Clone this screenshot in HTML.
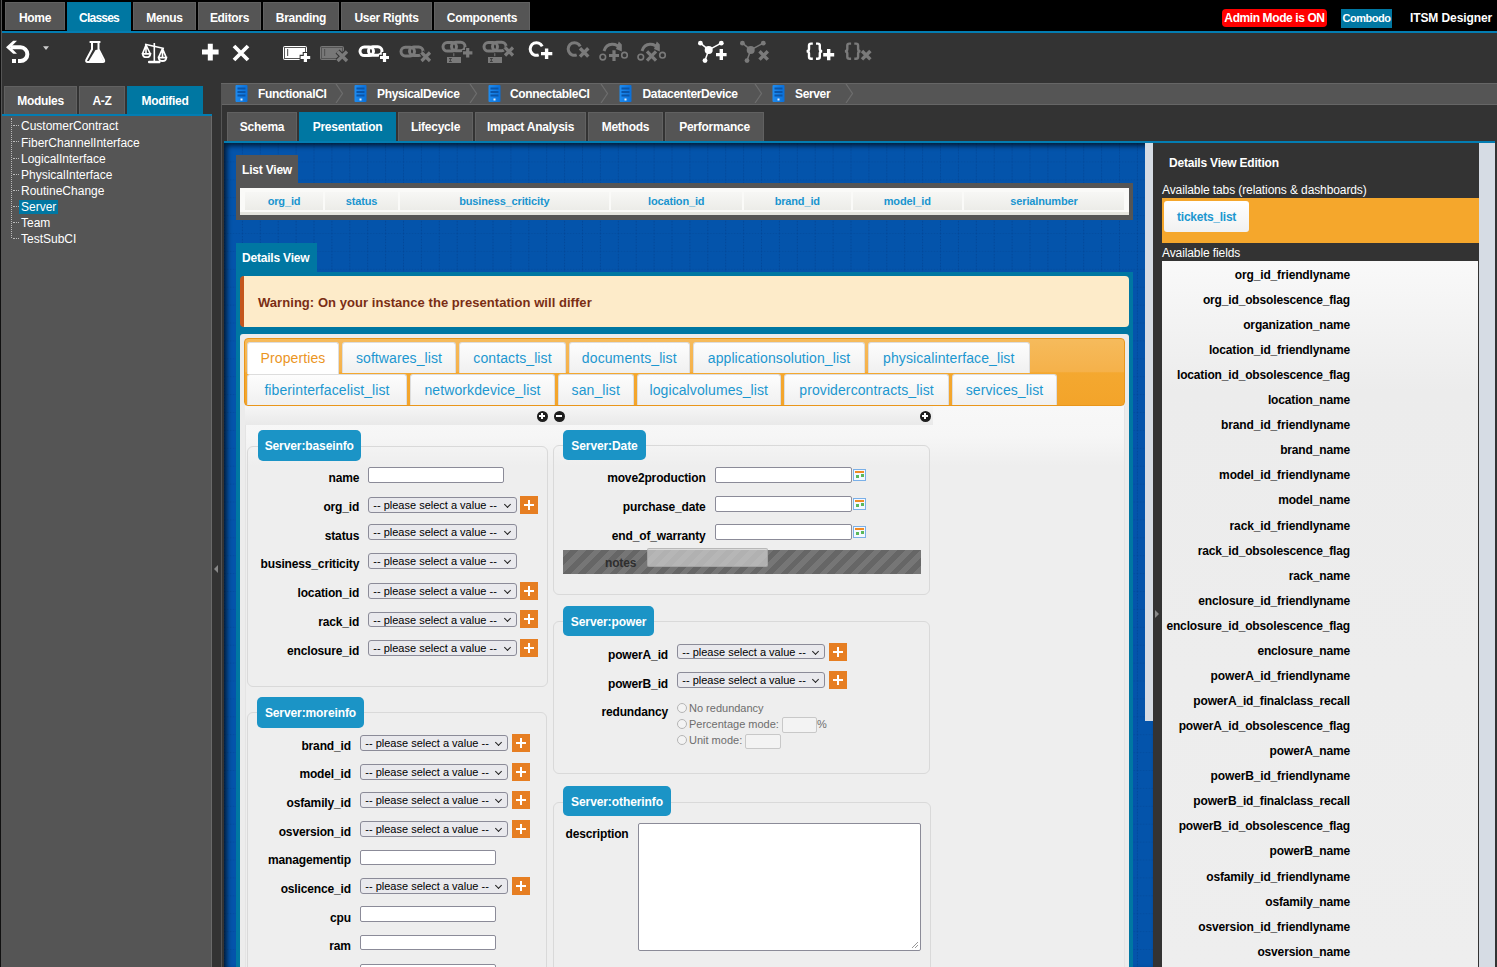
<!DOCTYPE html>
<html><head><meta charset="utf-8">
<style>
*{box-sizing:border-box;margin:0;padding:0}
html,body{width:1497px;height:967px;overflow:hidden;background:#333;font-family:"Liberation Sans",sans-serif;color:#fff}
.a{position:absolute}
#top{left:0;top:0;width:1497px;height:31px;background:#000}
.tt{position:absolute;top:2px;height:28px;background:#555;border:1px solid #616161;border-bottom:none;font-weight:bold;font-size:12px;line-height:30px;text-align:center;color:#fff;letter-spacing:-0.3px}
.tt.on{background:#0077a2;border-color:#0077a2;height:29px}
#bline{left:0;top:31px;width:1497px;height:2px;background:#037db2}
#lline{left:1px;top:0;width:1px;height:967px;background:#555}
#lline0{left:0;top:0;width:1px;height:967px;background:#111}
.lt{position:absolute;top:86px;height:29px;background:#555;border:1px solid #616161;border-bottom:none;font-weight:bold;font-size:12px;line-height:28px;text-align:center;letter-spacing:-0.3px}
.lt.on{background:#0077a2;border-color:#0077a2}
#tree{left:2px;top:116px;width:210px;height:851px;background:#555;border-right:1px solid #6a6a6a}
.ti{position:absolute;left:17px;height:14px;font-size:12px;line-height:14px;padding:0 2px;white-space:nowrap}
.ti.sel{background:#0077a2}
.th{position:absolute;left:11px;width:6px;height:0;border-top:1px dotted #bbb}
#crumb{left:221px;top:83px;width:1276px;height:22px;background:#555;border-top:1px solid #666;border-bottom:1px solid #666}
.cb{position:absolute;top:0;font-weight:bold;font-size:12px;line-height:21px;letter-spacing:-0.35px;white-space:nowrap}
.ct{position:absolute;top:112px;height:29px;background:#555;border:1px solid #616161;border-bottom:none;font-weight:bold;font-size:12px;line-height:28px;text-align:center;letter-spacing:-0.25px}
.ct.on{background:#0077a2;border-color:#0077a2}
#cline{left:224px;top:141px;width:1271px;height:2px;background:#037db2}
#canvas{left:224px;top:143px;width:929px;height:824px;background-color:#0454ab}

#sb1{left:1145px;top:143px;width:8px;height:578px;background:#d6dce4}
#rpanel{left:1153px;top:143px;width:326px;height:824px;background:#333}
#sb2{left:1479px;top:143px;width:16px;height:824px;background:#d6dce4}

.lvtab{left:236px;top:155px;width:62px;height:30px;background:#555;font-weight:bold;font-size:12px;line-height:31px;padding-left:6px;letter-spacing:-0.2px}
.lvbox{left:236px;top:183px;width:897px;height:37px;background:#555}
.lvwhite{left:240px;top:188px;width:889px;height:27px;background:#fafaf8;border-bottom:3px solid #e4e4de}
.lvc{position:absolute;top:192px;height:18px;background:linear-gradient(#f7f7f5,#ecece8);color:#1a95cf;font-weight:bold;font-size:11px;line-height:18px;text-align:center;letter-spacing:-0.15px}
.dvtab{left:236px;top:243px;width:81px;height:30px;background:#0077a2;font-weight:bold;font-size:12px;line-height:31px;padding-left:6px;letter-spacing:-0.2px}
.dvbox{left:236px;top:272px;width:897px;height:695px;background:#0077a2}
.warn{left:240px;top:276px;width:889px;height:51px;background:#fdebc9;border-left:4px solid #c4561d;border-radius:4px;color:#7a2e14;font-weight:bold;font-size:13px;line-height:53px;padding-left:14px;letter-spacing:0.05px}
.cont{left:240px;top:334px;width:889px;height:633px;background:#ececec;border-radius:3px 3px 0 0}
.cin{left:245px;top:406px;width:880px;height:561px;background:linear-gradient(#f8f8f8 0,#f6f6f6 30px,#eeeeee 60px);border-left:1px solid #e4e4e4;border-right:1px solid #e4e4e4}
.obar{left:244px;top:338px;width:881px;height:68px;background:linear-gradient(#f6bb5c,#f5b14a 50%,#f4a830 51%,#f3a42a);border:1px solid #e9961b;border-radius:4px}
.tb{position:absolute;height:31px;background:linear-gradient(#fdfdfd,#f0f0f0);border:1px solid #ddd;border-bottom:none;border-radius:3px 3px 0 0;color:#1c97d0;font-size:14px;line-height:30px;text-align:center;letter-spacing:0.1px;white-space:nowrap}
.tb.on{background:#fff;color:#eb951f}

.fs{position:absolute;border:1px solid #d9d9d9;border-radius:6px}
.lg{position:absolute;background:#1b94c6;border-radius:5px;color:#fff;font-weight:bold;font-size:12px;line-height:32px;text-align:center;letter-spacing:-0.1px;white-space:nowrap}
.lb{position:absolute;height:14px;line-height:14px;font-weight:bold;font-size:12px;color:#000;text-align:right;white-space:nowrap;letter-spacing:-0.15px}
.in{position:absolute;background:#fff;border:1px solid #8b8b98;border-radius:2px}
.se{position:absolute;background:#e9e9ed;border:1px solid #8b8b98;border-radius:3px;color:#000;font-size:11px;line-height:14px;padding-left:4px;white-space:nowrap}
.se:after{content:"";position:absolute;right:6px;top:3.5px;width:4px;height:4px;border-right:1.3px solid #222;border-bottom:1.3px solid #222;transform:rotate(45deg)}
.pl{position:absolute;width:18px;height:18px;background:#e67e22}
.pl:before{content:"";position:absolute;left:4px;top:8px;width:10px;height:2px;background:#fff}
.pl:after{content:"";position:absolute;left:8px;top:4px;width:2px;height:10px;background:#fff}
.cal{position:absolute;width:13px;height:12px;border:1px solid #7ab0e8;background:#f4f8ff}
.cal:before{content:"";position:absolute;left:1px;top:1px;width:9px;height:2px;background:#f08a24}
.cal:after{content:"";position:absolute;left:2px;top:5px;width:3px;height:3px;background:#5bb85b;box-shadow:5px -1px 0 #5bb85b}
.rd{position:absolute;width:10px;height:10px;border:1px solid #b5b5b5;border-radius:50%;background:#f3f3f3}
.rt{position:absolute;font-size:11px;line-height:13px;color:#6d6d6d;white-space:nowrap}
.strip{left:245px;top:406px;width:688px;height:19px;background:linear-gradient(#f6f6f6,#e9e9e9)}
.ic{position:absolute;width:11px;height:11px;border-radius:50%;background:#1e1e1e}
.ic:before{content:"";position:absolute;left:2.5px;top:4.5px;width:6px;height:2px;background:#fff}
.ic.p:after{content:"";position:absolute;left:4.5px;top:2.5px;width:2px;height:6px;background:#fff}

.rf{position:absolute;right:147px;height:14px;line-height:14px;font-weight:bold;font-size:12px;color:#000;white-space:nowrap;letter-spacing:-0.15px}
</style></head>
<body>
<div class="a" id="top"></div>
<div class="tt" style="left:5px;width:60px">Home</div>
<div class="tt on" style="left:67px;width:64px;letter-spacing:-0.8px">Classes</div>
<div class="tt" style="left:133px;width:63px">Menus</div>
<div class="tt" style="left:198px;width:63px">Editors</div>
<div class="tt" style="left:263px;width:76px">Branding</div>
<div class="tt" style="left:341px;width:91px">User Rights</div>
<div class="tt" style="left:434px;width:96px">Components</div>
<div class="a" style="left:1222px;top:9px;width:105px;height:18px;background:#f00;border-radius:4px;font-weight:bold;font-size:12px;line-height:18px;text-align:center;letter-spacing:-0.4px">Admin Mode is ON</div>
<div class="a" style="left:1341px;top:9px;width:51px;height:19px;background:#0077a2;font-weight:bold;font-size:11px;line-height:19px;text-align:center;letter-spacing:-0.5px">Combodo</div>
<div class="a" style="left:1410px;top:9px;height:18px;font-weight:bold;font-size:12px;line-height:18px;letter-spacing:-0.1px">ITSM Designer</div>
<div class="a" id="bline"></div>
<svg class="a" style="left:0;top:33px" width="900" height="50" viewBox="0 33 900 50">
<g fill="none" stroke="#fff" stroke-width="4">
 <path d="M11,47.3 H20.5 A6.85,6.85 0 0 1 20.5,61 H18"/>
</g>
<rect x="12" y="59" width="4" height="4" fill="#fff"/><polygon points="6,47.3 13.2,40.8 17,40.8 10.6,47.3 17,53.8 13.2,53.8" fill="#fff"/>
<polygon points="43,46.3 49,46.3 46,50" fill="#ccc"/>
<!-- flask -->
<g fill="none" stroke="#fff" stroke-width="2">
 <path d="M89.6,42 H100.4"/>
 <path d="M92,42 V49.3 L86.3,60 Q85.6,62 87.6,62 H102.8 Q104.8,62 104,60 L98.5,49.3 V42"/>
</g>
<polygon points="95.5,50 98.2,49.5 103.6,61 88.8,61" fill="#fff"/>
<!-- balance -->
<g fill="none" stroke="#fff" stroke-width="1.6">
 <path d="M145,44.3 L164,48.5"/>
 <path d="M154.3,43 V61.5"/>
 <path d="M146,45 L142.6,53.6 M146,45 L150.2,53.6 M146,45 V53.6"/>
 <path d="M162.5,48.6 L158.6,57.4 M162.5,48.6 L166.2,57.4 M162.5,48.6 V57.4"/>
</g>
<path d="M142.6,53.8 H150.4 Q150,57.2 146.5,57.2 Q143,57.2 142.6,53.8Z" fill="none" stroke="#fff" stroke-width="1.8"/>
<path d="M158.6,57.6 H166.4 Q166,61 162.5,61 Q159,61 158.6,57.6Z" fill="none" stroke="#fff" stroke-width="1.8"/>
<rect x="148" y="60.8" width="12.5" height="2.4" rx="1" fill="#fff"/>
<!-- plus / x -->
<path d="M202,52.1 H218.6 M210.3,43.8 V60.4" stroke="#fff" stroke-width="5"/>
<path d="M234,46 L248,60 M248,46 L234,60" stroke="#fff" stroke-width="3.8"/>
<!-- field add -->
<rect x="283" y="46" width="24" height="14" rx="2" fill="#fff"/>
<rect x="284.5" y="47.5" width="21" height="11" fill="none" stroke="#555" stroke-width="1"/>
<rect x="287" y="49" width="1.2" height="7" fill="#666"/>
<path d="M299.6,57.5 H311.2 M305.4,51.9 V63.1" stroke="#333" stroke-width="5.4"/>
<path d="M300.6,57.5 H310.2 M305.4,52.9 V62.1" stroke="#fff" stroke-width="3.2"/>
<!-- field remove -->
<rect x="320" y="46" width="24" height="14" rx="2" fill="#777"/>
<rect x="321.5" y="47.5" width="21" height="11" fill="none" stroke="#555" stroke-width="1"/>
<rect x="324" y="49" width="1.2" height="7" fill="#555"/>
<path d="M337.5,51.5 L347,61 M347,51.5 L337.5,61" stroke="#333" stroke-width="5.6"/>
<path d="M337.5,51.5 L347,61 M347,51.5 L337.5,61" stroke="#7a7a7a" stroke-width="3.4"/>
<!-- link add -->
<g fill="none" stroke-width="3">
 <rect x="360" y="47" width="13.5" height="8.6" rx="4.3" stroke="#fff"/>
 <rect x="368.5" y="46.8" width="13.5" height="8.4" rx="4.2" stroke="#fff"/>
</g>
<path d="M379,57.5 H390 M384.5,52 V63" stroke="#333" stroke-width="5.4"/>
<path d="M380,57.5 H389 M384.5,53 V62" stroke="#fff" stroke-width="3.2"/>
<!-- link remove -->
<g fill="none" stroke-width="3" stroke="#7a7a7a">
 <rect x="401" y="47.3" width="13.5" height="8.6" rx="4.3"/>
 <rect x="409.5" y="47" width="13.5" height="8.4" rx="4.2"/>
</g>
<path d="M421.5,52.5 L430,61 M430,52.5 L421.5,61" stroke="#333" stroke-width="5.4"/>
<path d="M421.5,52.5 L430,61 M430,52.5 L421.5,61" stroke="#7a7a7a" stroke-width="3.2"/>
<!-- link sum add -->
<g fill="none" stroke-width="3" stroke="#7a7a7a">
 <rect x="443" y="42.5" width="13.5" height="8.6" rx="4.3"/>
 <rect x="451.5" y="42.3" width="13.5" height="8.4" rx="4.2"/>
</g>
<rect x="447" y="57" width="14" height="6" fill="#7a7a7a"/>
<path d="M449,58.5 H451.5 L449.8,60 L451.5,61.5 H449" stroke="#333" stroke-width="0.8" fill="none"/>
<rect x="453.3" y="53.2" width="1" height="3" fill="#7a7a7a"/>
<path d="M462.2,52.8 H473.2 M467.7,47.2 V58.4" stroke="#333" stroke-width="5.4"/>
<path d="M463,52.8 H472.4 M467.7,48 V57.6" stroke="#7a7a7a" stroke-width="3.2"/>
<!-- link sum remove -->
<g fill="none" stroke-width="3" stroke="#7a7a7a">
 <rect x="484" y="42.5" width="13.5" height="8.6" rx="4.3"/>
 <rect x="492.5" y="42.3" width="13.5" height="8.4" rx="4.2"/>
</g>
<rect x="488" y="57" width="14" height="6" fill="#7a7a7a"/>
<path d="M490,58.5 H492.5 L490.8,60 L492.5,61.5 H490" stroke="#333" stroke-width="0.8" fill="none"/>
<rect x="494.3" y="53.2" width="1" height="3" fill="#7a7a7a"/>
<path d="M505,47.5 L513,55.5 M513,47.5 L505,55.5" stroke="#333" stroke-width="5.4"/>
<path d="M505,47.5 L513,55.5 M513,47.5 L505,55.5" stroke="#7a7a7a" stroke-width="3.2"/>
<!-- circle add -->
<path d="M542.2,46.3 A6.3,6.3 0 1 0 538.7,54.9" fill="none" stroke="#fff" stroke-width="3"/>
<path d="M541,53.6 H552.3 M546.6,48.4 V58.9" stroke="#fff" stroke-width="3.4"/>
<!-- circle remove -->
<path d="M580.2,46.3 A6.3,6.3 0 1 0 576.7,54.9" fill="none" stroke="#7a7a7a" stroke-width="3"/>
<path d="M580,48.2 L588.3,56.6 M588.3,48.2 L580,56.6" stroke="#7a7a7a" stroke-width="3.4"/>
<!-- arc add -->
<g fill="none" stroke="#7a7a7a">
 <circle cx="602.8" cy="57.1" r="2.8" stroke-width="1.6"/>
 <circle cx="624.5" cy="55.2" r="2.8" stroke-width="1.6"/>
 <path d="M604,51 Q606,44.5 612,44.3 Q618,44.2 620,49" stroke-width="3"/>
</g>
<polygon points="618.8,41.6 621.8,44.5 621.8,51.5 616,49" fill="#7a7a7a"/>
<path d="M609,55.5 H619 M614,50.2 V60.9" stroke="#7a7a7a" stroke-width="3.2"/>
<!-- arc remove -->
<g fill="none" stroke="#7a7a7a">
 <circle cx="640.8" cy="57.1" r="2.8" stroke-width="1.6"/>
 <circle cx="662.5" cy="55.2" r="2.8" stroke-width="1.6"/>
 <path d="M642,51 Q644,44.5 650,44.3 Q656,44.2 658,49" stroke-width="3"/>
</g>
<polygon points="656.8,41.6 659.8,44.5 659.8,51.5 654,49" fill="#7a7a7a"/>
<path d="M647,51.3 L656,60.7 M656,51.3 L647,60.7" stroke="#7a7a7a" stroke-width="3.2"/>
<!-- node add -->
<g fill="none" stroke="#fff" stroke-width="1.5"><path d="M700.4,43.2 L708.7,49.9 L721.3,43.2 M708.7,49.9 L705,60.6"/></g>
<g fill="#fff"><circle cx="708.7" cy="49.9" r="4"/><circle cx="700.4" cy="43.2" r="2.4"/><circle cx="721.3" cy="43.2" r="2.4"/><circle cx="705" cy="60.6" r="2.4"/></g>
<path d="M716,54.6 H726.6 M721.3,49.1 V60" stroke="#fff" stroke-width="3.4"/>
<!-- node remove -->
<g fill="none" stroke="#7a7a7a" stroke-width="1.5"><path d="M742.4,43.2 L750.7,49.9 L763.3,43.2 M750.7,49.9 L747,60.6"/></g>
<g fill="#7a7a7a"><circle cx="750.7" cy="49.9" r="4"/><circle cx="742.4" cy="43.2" r="2.4"/><circle cx="763.3" cy="43.2" r="2.4"/><circle cx="747" cy="60.6" r="2.4"/></g>
<path d="M759.5,51.3 L767.8,59.6 M767.8,51.3 L759.5,59.6" stroke="#7a7a7a" stroke-width="3.4"/>
<!-- braces add -->
<g fill="none" stroke="#fff" stroke-width="2.4">
 <path d="M812.8,43.6 H811 Q809,43.6 809,45.6 V49 Q809,51.2 806.6,51.2 Q809,51.2 809,53.4 V56.8 Q809,58.8 811,58.8 H812.8"/>
 <path d="M816,43.6 H817.8 Q819.8,43.6 819.8,45.6 V49 Q819.8,51.2 822.2,51.2 Q819.8,51.2 819.8,53.4 V56.8 Q819.8,58.8 817.8,58.8 H816"/>
</g>
<path d="M823.2,54.7 H834.2 M828.7,49.1 V60.3" stroke="#fff" stroke-width="3.4"/>
<!-- braces remove -->
<g fill="none" stroke="#7a7a7a" stroke-width="2.4">
 <path d="M851.1,43.6 H849.3 Q847.3,43.6 847.3,45.6 V49 Q847.3,51.2 844.9,51.2 Q847.3,51.2 847.3,53.4 V56.8 Q847.3,58.8 849.3,58.8 H851.1"/>
 <path d="M854.3,43.6 H856.1 Q858.1,43.6 858.1,45.6 V49 Q858.1,51.2 860.5,51.2 Q858.1,51.2 858.1,53.4 V56.8 Q858.1,58.8 856.1,58.8 H854.3"/>
</g>
<path d="M862,51 L870.4,59.4 M870.4,51 L862,59.4" stroke="#7a7a7a" stroke-width="3.4"/>
</svg>

<div class="a" id="lline0"></div>
<div class="a" id="lline"></div>
<!--LEFT-->
<div class="lt" style="left:4px;width:73px">Modules</div>
<div class="lt" style="left:79px;width:46px">A-Z</div>
<div class="lt on" style="left:127px;width:76px">Modified</div>
<div class="a" style="left:2px;top:114px;width:210px;height:2px;background:#037db2"></div>
<div class="a" id="tree">
<div class="ti" style="top:3.4px">CustomerContract</div>
<div class="th" style="top:9px"></div>
<div class="ti" style="top:19.5px">FiberChannelInterface</div>
<div class="th" style="top:25px"></div>
<div class="ti" style="top:35.5px">LogicalInterface</div>
<div class="th" style="top:42px"></div>
<div class="ti" style="top:51.6px">PhysicalInterface</div>
<div class="th" style="top:58px"></div>
<div class="ti" style="top:67.6px">RoutineChange</div>
<div class="th" style="top:74px"></div>
<div class="ti sel" style="top:83.7px">Server</div>
<div class="th" style="top:90px"></div>
<div class="ti" style="top:99.7px">Team</div>
<div class="th" style="top:106px"></div>
<div class="ti" style="top:115.8px">TestSubCI</div>
<div class="th" style="top:122px"></div>
<div class="a" style="left:9px;top:2px;width:0;height:120px;border-left:1px dotted #bbb"></div>
</div>
<div class="a" style="left:212px;top:116px;width:9px;height:851px;background:#333"></div>
<div class="a" style="left:214px;top:565px;width:0;height:0;border-right:4px solid #888;border-top:4px solid transparent;border-bottom:4px solid transparent"></div>
<!--CRUMB-->
<div class="a" id="crumb"></div>
<svg class="a" style="left:234.5px;top:85px" width="13" height="18" viewBox="0 0 13 18"><defs><linearGradient id="g234.5" x1="0" x2="1"><stop offset="0" stop-color="#1e8cf0"/><stop offset="1" stop-color="#0a6fd8"/></linearGradient></defs><rect x="0.5" y="0" width="12" height="17" rx="1" fill="url(#g234.5)"/><rect x="2.5" y="2.5" width="8" height="2" fill="#0b55a8"/><rect x="2.5" y="6" width="8" height="2" fill="#0b55a8"/><rect x="2.5" y="9.5" width="8" height="2" fill="#0b55a8"/><rect x="5.5" y="13.5" width="2" height="2" fill="#e8f2ff"/></svg><div class="cb" style="left:258px;top:84px">FunctionalCI</div><svg class="a" style="left:335px;top:84px" width="9" height="19" viewBox="0 0 9 19"><path d="M1,0 L7.5,9.5 L1,19" fill="none" stroke="#6e6e6e" stroke-width="1.2"/></svg>
<svg class="a" style="left:354px;top:85px" width="13" height="18" viewBox="0 0 13 18"><defs><linearGradient id="g354" x1="0" x2="1"><stop offset="0" stop-color="#1e8cf0"/><stop offset="1" stop-color="#0a6fd8"/></linearGradient></defs><rect x="0.5" y="0" width="12" height="17" rx="1" fill="url(#g354)"/><rect x="2.5" y="2.5" width="8" height="2" fill="#0b55a8"/><rect x="2.5" y="6" width="8" height="2" fill="#0b55a8"/><rect x="2.5" y="9.5" width="8" height="2" fill="#0b55a8"/><rect x="5.5" y="13.5" width="2" height="2" fill="#e8f2ff"/></svg><div class="cb" style="left:377px;top:84px">PhysicalDevice</div><svg class="a" style="left:469px;top:84px" width="9" height="19" viewBox="0 0 9 19"><path d="M1,0 L7.5,9.5 L1,19" fill="none" stroke="#6e6e6e" stroke-width="1.2"/></svg>
<svg class="a" style="left:487.5px;top:85px" width="13" height="18" viewBox="0 0 13 18"><defs><linearGradient id="g487.5" x1="0" x2="1"><stop offset="0" stop-color="#1e8cf0"/><stop offset="1" stop-color="#0a6fd8"/></linearGradient></defs><rect x="0.5" y="0" width="12" height="17" rx="1" fill="url(#g487.5)"/><rect x="2.5" y="2.5" width="8" height="2" fill="#0b55a8"/><rect x="2.5" y="6" width="8" height="2" fill="#0b55a8"/><rect x="2.5" y="9.5" width="8" height="2" fill="#0b55a8"/><rect x="5.5" y="13.5" width="2" height="2" fill="#e8f2ff"/></svg><div class="cb" style="left:510px;top:84px">ConnectableCI</div><svg class="a" style="left:600px;top:84px" width="9" height="19" viewBox="0 0 9 19"><path d="M1,0 L7.5,9.5 L1,19" fill="none" stroke="#6e6e6e" stroke-width="1.2"/></svg>
<svg class="a" style="left:619px;top:85px" width="13" height="18" viewBox="0 0 13 18"><defs><linearGradient id="g619" x1="0" x2="1"><stop offset="0" stop-color="#1e8cf0"/><stop offset="1" stop-color="#0a6fd8"/></linearGradient></defs><rect x="0.5" y="0" width="12" height="17" rx="1" fill="url(#g619)"/><rect x="2.5" y="2.5" width="8" height="2" fill="#0b55a8"/><rect x="2.5" y="6" width="8" height="2" fill="#0b55a8"/><rect x="2.5" y="9.5" width="8" height="2" fill="#0b55a8"/><rect x="5.5" y="13.5" width="2" height="2" fill="#e8f2ff"/></svg><div class="cb" style="left:642.5px;top:84px">DatacenterDevice</div><svg class="a" style="left:754px;top:84px" width="9" height="19" viewBox="0 0 9 19"><path d="M1,0 L7.5,9.5 L1,19" fill="none" stroke="#6e6e6e" stroke-width="1.2"/></svg>
<svg class="a" style="left:772px;top:85px" width="13" height="18" viewBox="0 0 13 18"><defs><linearGradient id="g772" x1="0" x2="1"><stop offset="0" stop-color="#1e8cf0"/><stop offset="1" stop-color="#0a6fd8"/></linearGradient></defs><rect x="0.5" y="0" width="12" height="17" rx="1" fill="url(#g772)"/><rect x="2.5" y="2.5" width="8" height="2" fill="#0b55a8"/><rect x="2.5" y="6" width="8" height="2" fill="#0b55a8"/><rect x="2.5" y="9.5" width="8" height="2" fill="#0b55a8"/><rect x="5.5" y="13.5" width="2" height="2" fill="#e8f2ff"/></svg><div class="cb" style="left:795px;top:84px">Server</div><svg class="a" style="left:845px;top:84px" width="9" height="19" viewBox="0 0 9 19"><path d="M1,0 L7.5,9.5 L1,19" fill="none" stroke="#6e6e6e" stroke-width="1.2"/></svg>

<div class="a" style="left:221px;top:104px;width:1px;height:863px;background:#555"></div>
<div class="ct" style="left:227px;width:70px">Schema</div>
<div class="ct on" style="left:299px;width:97px">Presentation</div>
<div class="ct" style="left:398px;width:75px">Lifecycle</div>
<div class="ct" style="left:475px;width:111px">Impact Analysis</div>
<div class="ct" style="left:588px;width:75px">Methods</div>
<div class="ct" style="left:665px;width:99px">Performance</div>
<div class="a" id="cline"></div>
<div class="a" id="canvas"></div>
<svg class="a" style="left:224px;top:143px" width="929" height="824"><defs><pattern id="grd" x="0" y="0.5" width="17.9" height="17.9" patternUnits="userSpaceOnUse"><path d="M0.4,0 V17.9 M0,0 H17.9" stroke="#002a6a" stroke-opacity=".32" stroke-width="1" stroke-dasharray="1.6 1.3" fill="none"/></pattern></defs><rect width="929" height="824" fill="url(#grd)"/></svg>
<div class="a" style="left:224px;top:143px;width:929px;height:824px;box-shadow:inset 3px 3px 5px rgba(0,0,0,.65)"></div>
<div class="a lvbox"></div><div class="a lvtab">List View</div><div class="a lvwhite"></div>
<div class="lvc" style="left:245px;width:78.0px">org_id</div><div class="lvc" style="left:325px;width:73.0px">status</div><div class="lvc" style="left:400px;width:208.5px">business_criticity</div><div class="lvc" style="left:610.5px;width:131.5px">location_id</div><div class="lvc" style="left:744px;width:106.5px">brand_id</div><div class="lvc" style="left:852.5px;width:109.5px">model_id</div><div class="lvc" style="left:964px;width:160.0px">serialnumber</div>
<div class="a dvbox"></div><div class="a dvtab">Details View</div>
<div class="a warn">Warning: On your instance the presentation will differ</div>
<div class="a cont"></div><div class="a cin"></div><div class="a obar"></div>
<div class="tb on" style="left:247px;top:342px;width:92px;height:32px">Properties</div>
<div class="tb" style="left:342px;top:342px;width:114px;height:31px">softwares_list</div>
<div class="tb" style="left:459px;top:342px;width:107px;height:31px">contacts_list</div>
<div class="tb" style="left:568.5px;top:342px;width:121.5px;height:31px">documents_list</div>
<div class="tb" style="left:693px;top:342px;width:172px;height:31px">applicationsolution_list</div>
<div class="tb" style="left:868px;top:342px;width:161.5px;height:31px">physicalinterface_list</div>
<div class="tb" style="left:247px;top:374px;width:160px">fiberinterfacelist_list</div>
<div class="tb" style="left:410px;top:374px;width:145px">networkdevice_list</div>
<div class="tb" style="left:558px;top:374px;width:75.5px">san_list</div>
<div class="tb" style="left:636.5px;top:374px;width:144.5px">logicalvolumes_list</div>
<div class="tb" style="left:784px;top:374px;width:165px">providercontracts_list</div>
<div class="tb" style="left:952px;top:374px;width:105px">services_list</div>
<div class="a strip"></div>
<div class="ic p" style="left:536.5px;top:410.5px"></div><div class="ic" style="left:553.5px;top:410.5px"></div><div class="ic p" style="left:919.5px;top:410.5px"></div>
<div class="fs" style="left:247px;top:445.5px;width:301px;height:241.0px"></div>
<div class="lg" style="left:257.5px;top:430px;width:103.5px;height:30.5px">Server:baseinfo</div>
<div class="lb" style="right:1137.8px;top:471.3px">name</div>
<div class="in" style="left:368.3px;top:467.2px;width:136.09999999999997px;height:15.600000000000023px"></div>
<div class="lb" style="right:1137.8px;top:500.3px">org_id</div>
<div class="se" style="left:368.3px;top:497.2px;width:148.49999999999994px;height:15.599999999999966px">-- please select a value --</div>
<div class="pl" style="left:520px;top:496.0px"></div>
<div class="lb" style="right:1137.8px;top:529.3px">status</div>
<div class="se" style="left:368.3px;top:524.3px;width:148.49999999999994px;height:15.600000000000023px">-- please select a value --</div>
<div class="lb" style="right:1137.8px;top:557.3px">business_criticity</div>
<div class="se" style="left:368.3px;top:553px;width:148.49999999999994px;height:15.600000000000023px">-- please select a value --</div>
<div class="lb" style="right:1137.8px;top:586.3px">location_id</div>
<div class="se" style="left:368.3px;top:583px;width:148.49999999999994px;height:15.600000000000023px">-- please select a value --</div>
<div class="pl" style="left:520px;top:581.8px"></div>
<div class="lb" style="right:1137.8px;top:615.3px">rack_id</div>
<div class="se" style="left:368.3px;top:611.5px;width:148.49999999999994px;height:15.600000000000023px">-- please select a value --</div>
<div class="pl" style="left:520px;top:610.3px"></div>
<div class="lb" style="right:1137.8px;top:643.8px">enclosure_id</div>
<div class="se" style="left:368.3px;top:640px;width:148.49999999999994px;height:15.600000000000023px">-- please select a value --</div>
<div class="pl" style="left:520px;top:638.8px"></div>
<div class="fs" style="left:247px;top:712.3px;width:300px;height:387.70000000000005px"></div>
<div class="lg" style="left:257.2px;top:697px;width:106.60000000000002px;height:30.799999999999955px">Server:moreinfo</div>
<div class="lb" style="right:1146.1px;top:738.5px">brand_id</div>
<div class="se" style="left:360.3px;top:735.3px;width:148.2px;height:15.600000000000023px">-- please select a value --</div>
<div class="pl" style="left:512.2px;top:733.9px"></div>
<div class="lb" style="right:1146.1px;top:767.2px">model_id</div>
<div class="se" style="left:360.3px;top:764.2px;width:148.2px;height:15.600000000000023px">-- please select a value --</div>
<div class="pl" style="left:512.2px;top:762.8000000000001px"></div>
<div class="lb" style="right:1146.1px;top:795.8px">osfamily_id</div>
<div class="se" style="left:360.3px;top:792.3px;width:148.2px;height:15.600000000000023px">-- please select a value --</div>
<div class="pl" style="left:512.2px;top:790.9px"></div>
<div class="lb" style="right:1146.1px;top:824.5px">osversion_id</div>
<div class="se" style="left:360.3px;top:821.2px;width:148.2px;height:15.600000000000023px">-- please select a value --</div>
<div class="pl" style="left:512.2px;top:819.8000000000001px"></div>
<div class="lb" style="right:1146.1px;top:853.2px">managementip</div>
<div class="in" style="left:360.3px;top:849.6px;width:136.09999999999997px;height:15.399999999999977px"></div>
<div class="lb" style="right:1146.1px;top:881.8px">oslicence_id</div>
<div class="se" style="left:360.3px;top:878.2px;width:148.2px;height:15.600000000000023px">-- please select a value --</div>
<div class="pl" style="left:512.2px;top:876.8000000000001px"></div>
<div class="lb" style="right:1146.1px;top:910.5px">cpu</div>
<div class="in" style="left:360.3px;top:906.3px;width:136.09999999999997px;height:15.399999999999977px"></div>
<div class="lb" style="right:1146.1px;top:939.1px">ram</div>
<div class="in" style="left:360.3px;top:935px;width:136.09999999999997px;height:15.399999999999977px"></div>
<div class="in" style="left:360.3px;top:963.6px;width:136.09999999999997px;height:15.399999999999977px"></div>
<div class="fs" style="left:553px;top:445.3px;width:377.29999999999995px;height:149.7px"></div>
<div class="lg" style="left:563px;top:430.4px;width:83px;height:29.80000000000001px">Server:Date</div>
<div class="lb" style="right:791.4px;top:471.2px">move2production</div>
<div class="in" style="left:715.3px;top:467.3px;width:136.4000000000001px;height:15.399999999999977px"></div>
<div class="cal" style="left:853px;top:469.0px"></div>
<div class="lb" style="right:791.4px;top:500.2px">purchase_date</div>
<div class="in" style="left:715.3px;top:496.3px;width:136.4000000000001px;height:15.399999999999977px"></div>
<div class="cal" style="left:853px;top:498.0px"></div>
<div class="lb" style="right:791.4px;top:529.0px">end_of_warranty</div>
<div class="in" style="left:715.3px;top:524.2px;width:136.4000000000001px;height:15.399999999999977px"></div>
<div class="cal" style="left:853px;top:525.9px"></div>
<div class="a" style="left:563px;top:549.5px;width:358px;height:24.2px;background:repeating-linear-gradient(135deg,#767676 0 5.5px,#666 5.5px 11px)"></div>
<div class="a" style="left:647px;top:548.4px;width:121px;height:18.6px;background:rgba(210,210,210,.7);border:1px solid rgba(150,150,150,.5);border-radius:2px"></div>
<div class="lb" style="left:605px;top:556px;color:#2e2e2e">notes</div>
<div class="fs" style="left:553px;top:621px;width:377.29999999999995px;height:153.29999999999995px"></div>
<div class="lg" style="left:563px;top:606px;width:91.20000000000005px;height:29.799999999999955px">Server:power</div>
<div class="lb" style="right:829px;top:648.0px">powerA_id</div>
<div class="se" style="left:677.3px;top:644px;width:148.10000000000002px;height:15.399999999999977px">-- please select a value --</div>
<div class="pl" style="left:829px;top:642.8px"></div>
<div class="lb" style="right:829px;top:677.0px">powerB_id</div>
<div class="se" style="left:677.3px;top:672.3px;width:148.10000000000002px;height:15.399999999999977px">-- please select a value --</div>
<div class="pl" style="left:829px;top:671.0999999999999px"></div>
<div class="lb" style="right:829px;top:704.6px">redundancy</div>
<div class="rd" style="left:677.4px;top:703.4px"></div><div class="rt" style="left:689px;top:701.9px">No redundancy</div>
<div class="rd" style="left:677.4px;top:719.4px"></div><div class="rt" style="left:689px;top:717.9px">Percentage mode:</div>
<div class="rd" style="left:677.4px;top:735.4px"></div><div class="rt" style="left:689px;top:733.9px">Unit mode:</div>
<div class="in" style="left:781.5px;top:717px;width:35px;height:15.6px;border-color:#c8c8c8;background:#f3f3f3"></div><div class="rt" style="left:817px;top:717.9px">%</div>
<div class="in" style="left:745.4px;top:733.7px;width:35.3px;height:15px;border-color:#c8c8c8;background:#f3f3f3"></div>
<div class="fs" style="left:553.3px;top:801.8px;width:377.70000000000005px;height:298.20000000000005px"></div>
<div class="lg" style="left:563px;top:786.3px;width:108px;height:29.300000000000068px">Server:otherinfo</div>
<div class="lb" style="left:565.5px;top:827px">description</div>
<div class="in" style="left:637.6px;top:823px;width:283.2px;height:128.3px"></div>
<svg class="a" style="left:911px;top:941px" width="8" height="8"><path d="M7,1 L1,7 M7,4 L4,7" stroke="#999" stroke-width="1"/></svg>
<!--FORM-->
<div class="a" id="sb1"></div>
<div class="a" id="rpanel"></div>
<div class="a" id="sb2"></div>
<div class="a" style="left:1169px;top:155.8px;font-weight:bold;font-size:12px;line-height:14px;letter-spacing:-0.2px">Details View Edition</div>
<div class="a" style="left:1162px;top:182.7px;font-size:12px;line-height:14px;letter-spacing:-0.1px">Available tabs (relations &amp; dashboards)</div>
<div class="a" style="left:1162px;top:198px;width:316.5px;height:45px;background:#f5a72c"></div>
<div class="a" style="left:1164.3px;top:201.3px;width:84.6px;height:30.7px;background:linear-gradient(#fff,#f1f1f1);border-radius:3px;color:#1c97d0;font-weight:bold;font-size:12px;line-height:33px;text-align:center;letter-spacing:-0.25px">tickets_list</div>
<div class="a" style="left:1162px;top:246.2px;font-size:12px;line-height:14px;letter-spacing:-0.1px">Available fields</div>
<div class="a" style="left:1162px;top:261px;width:316px;height:706px;background:linear-gradient(#f9f9f9 0,#ececec 130px,#eeeeee)"></div>
<div class="rf" style="top:267.8px">org_id_friendlyname</div>
<div class="rf" style="top:292.9px">org_id_obsolescence_flag</div>
<div class="rf" style="top:317.9px">organization_name</div>
<div class="rf" style="top:343.0px">location_id_friendlyname</div>
<div class="rf" style="top:368.1px">location_id_obsolescence_flag</div>
<div class="rf" style="top:393.2px">location_name</div>
<div class="rf" style="top:418.2px">brand_id_friendlyname</div>
<div class="rf" style="top:443.3px">brand_name</div>
<div class="rf" style="top:468.4px">model_id_friendlyname</div>
<div class="rf" style="top:493.4px">model_name</div>
<div class="rf" style="top:518.5px">rack_id_friendlyname</div>
<div class="rf" style="top:543.6px">rack_id_obsolescence_flag</div>
<div class="rf" style="top:568.6px">rack_name</div>
<div class="rf" style="top:593.7px">enclosure_id_friendlyname</div>
<div class="rf" style="top:618.8px">enclosure_id_obsolescence_flag</div>
<div class="rf" style="top:643.8px">enclosure_name</div>
<div class="rf" style="top:668.9px">powerA_id_friendlyname</div>
<div class="rf" style="top:694.0px">powerA_id_finalclass_recall</div>
<div class="rf" style="top:719.1px">powerA_id_obsolescence_flag</div>
<div class="rf" style="top:744.1px">powerA_name</div>
<div class="rf" style="top:769.2px">powerB_id_friendlyname</div>
<div class="rf" style="top:794.3px">powerB_id_finalclass_recall</div>
<div class="rf" style="top:819.3px">powerB_id_obsolescence_flag</div>
<div class="rf" style="top:844.4px">powerB_name</div>
<div class="rf" style="top:869.5px">osfamily_id_friendlyname</div>
<div class="rf" style="top:894.5px">osfamily_name</div>
<div class="rf" style="top:919.6px">osversion_id_friendlyname</div>
<div class="rf" style="top:944.7px">osversion_name</div>
<div class="a" style="left:1155px;top:610px;width:0;height:0;border-left:4px solid #888;border-top:4px solid transparent;border-bottom:4px solid transparent"></div>
<!--RIGHT-->
</body></html>
